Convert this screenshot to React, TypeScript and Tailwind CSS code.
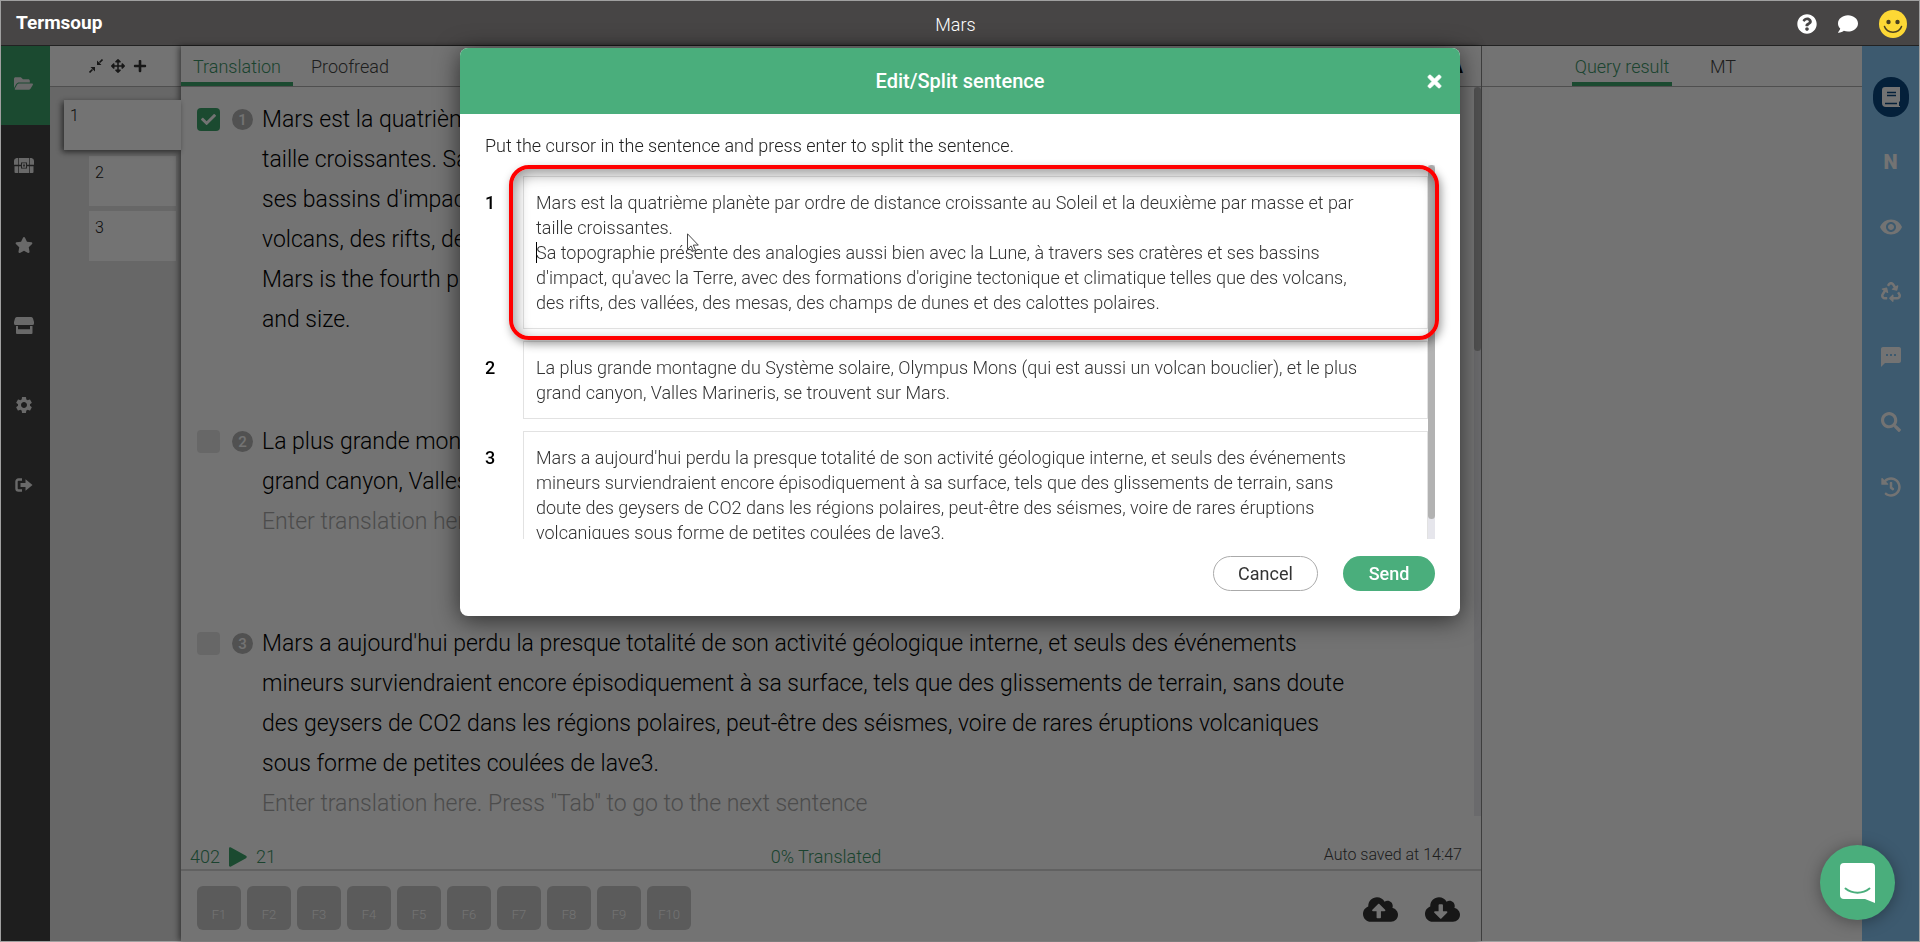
import { useState, type ReactNode } from "react";
import {
  FaFolderOpen,
  FaStar,
  FaArrowsAlt,
  FaPlus,
  FaQuestionCircle,
  FaComment,
  FaRecycle,
  FaSearch,
  FaHistory,
  FaCloudUploadAlt,
  FaCloudDownloadAlt,
  FaTimes,
  FaCheck,
} from "react-icons/fa";
import { MdSettings, MdVisibility, MdSms } from "react-icons/md";

const sentences = [
  "Mars est la quatrième planète par ordre de distance croissante au Soleil et la deuxième par masse et par\ntaille croissantes.\nSa topographie présente des analogies aussi bien avec la Lune, à travers ses cratères et ses bassins\nd'impact, qu'avec la Terre, avec des formations d'origine tectonique et climatique telles que des volcans,\ndes rifts, des vallées, des mesas, des champs de dunes et des calottes polaires.",
  "La plus grande montagne du Système solaire, Olympus Mons (qui est aussi un volcan bouclier), et le plus\ngrand canyon, Valles Marineris, se trouvent sur Mars.",
  "Mars a aujourd'hui perdu la presque totalité de son activité géologique interne, et seuls des événements\nmineurs surviendraient encore épisodiquement à sa surface, tels que des glissements de terrain, sans\ndoute des geysers de CO2 dans les régions polaires, peut-être des séismes, voire de rares éruptions\nvolcaniques sous forme de petites coulées de lave3.",
];

const segments = [
  {
    done: true,
    source:
      "Mars est la quatrième planète par ordre de distance croissante au Soleil et la deuxième par masse et par\ntaille croissantes. Sa topographie présente des analogies aussi bien avec la Lune, à travers ses cratères et\nses bassins d'impact, qu'avec la Terre, avec des formations d'origine tectonique et climatique telles que des\nvolcans, des rifts, des vallées, des mesas, des champs de dunes et des calottes polaires.",
    target: "Mars is the fourth planet from the Sun by distance and the second by increasing mass\nand size.",
  },
  {
    done: false,
    source:
      "La plus grande montagne du Système solaire, Olympus Mons (qui est aussi un volcan bouclier), et le plus\ngrand canyon, Valles Marineris, se trouvent sur Mars.",
    target: "",
  },
  {
    done: false,
    source:
      "Mars a aujourd'hui perdu la presque totalité de son activité géologique interne, et seuls des événements\nmineurs surviendraient encore épisodiquement à sa surface, tels que des glissements de terrain, sans doute\ndes geysers de CO2 dans les régions polaires, peut-être des séismes, voire de rares éruptions volcaniques\nsous forme de petites coulées de lave3.",
    target: "",
  },
];

const fKeys = ["F1", "F2", "F3", "F4", "F5", "F6", "F7", "F8", "F9", "F10"];

function ChestIcon() {
  return (
    <svg viewBox="0 0 20 15" className="w-5 h-[15px]" fill="currentColor">
      <path d="M2.500 0H4v6.800H0V3A3 3 0 0 1 2.500 0zM4.700 0h10.600v6.800H13V4.600H7v2.200H4.700zM16 0h1.500A3 3 0 0 1 20 3v3.800h-4zM.5 8.200H4V15H1.500a1 1 0 0 1-1-1zM4.700 8.200H7v2.300h6V8.200h2.300V15H4.700zM16 8.200h3.500V14a1 1 0 0 1-1 1H16z" />
      <path fillRule="evenodd" d="M7.900 5.300h4.200v4.500H7.900zM9.200 6.500v2.100h1.600V6.500z" />
    </svg>
  );
}

function StoreIcon() {
  return (
    <svg viewBox="0 0 20 17" className="w-5 h-[17px]" fill="currentColor">
      <path d="M3 0h14a2 2 0 0 1 2 1.500L20 5v1.500A1.500 1.500 0 0 1 18.500 8h-17A1.500 1.500 0 0 1 0 6.500V5l1-3.500A2 2 0 0 1 3 0z" />
      <path d="M2 9h2v3.300h12V9h2.500v7a1 1 0 0 1-1 1H3a1 1 0 0 1-1-1z" />
    </svg>
  );
}

function LeaveIcon() {
  return (
    <svg viewBox="0 0 18 14" className="w-[18px] h-3.5" fill="currentColor">
      <path d="M7 1.500H3.500a2 2 0 0 0-2 2v7a2 2 0 0 0 2 2H7" fill="none" stroke="currentColor" strokeWidth="2.400" />
      <path d="M5.500 5h5V1.200L17.500 7l-7 5.800V9h-5z" />
    </svg>
  );
}

function ShrinkIcon() {
  return (
    <svg viewBox="0 0 14 14" className="h-3.5 w-3.5" fill="currentColor">
      <path d="M13.500.5 10.500 3.500M.5 13.500l3-3" stroke="currentColor" strokeWidth="1.600" />
      <path d="M8 1.500V6h4.500zM1.500 8H6v4.500z" />
    </svg>
  );
}

function BookIcon() {
  return (
    <svg viewBox="0 0 18 20" className="w-[18px] h-5">
      <path d="M3 0h15v14.500h-1V19h1v1H4a4 4 0 0 1-4-4V3a3 3 0 0 1 3-3z" fill="currentColor" />
      <path d="M5 5.500h9M5 8.500h9M3 16.500h12" stroke="#0a4780" strokeWidth="1.600" />
    </svg>
  );
}

function SmileyIcon() {
  return (
    <svg viewBox="0 0 28 28" className="w-7 h-7">
      <circle cx="14" cy="14" r="14" fill="#fdd835" />
      <circle cx="9.500" cy="12" r="2.200" fill="#4a4020" />
      <circle cx="18.500" cy="12" r="2.200" fill="#4a4020" />
      <path d="M5.500 16.500C8 24 20 24 22.500 16.500" fill="none" stroke="#4a4020" strokeWidth="1.500" strokeLinecap="round" />
    </svg>
  );
}

function NavButton({ label, active, children }: { label: string; active?: boolean; children: ReactNode }) {
  return (
    <button
      aria-label={label}
      className={`flex w-full items-center justify-center pr-1 text-[#e8e8e8] ${active ? "h-[79px] bg-[#3ca56c] pb-1" : "h-20"}`}
    >
      {children}
    </button>
  );
}

function ToolButton({ label, active, children }: { label: string; active?: boolean; children: ReactNode }) {
  return (
    <button
      aria-label={label}
      className={`flex h-10 w-9 items-center justify-center rounded-full text-[20px] text-white ${active ? "bg-[#0a4780]" : ""}`}
    >
      {children}
    </button>
  );
}

function Header() {
  return (
    <header className="flex h-[45px] shrink-0 items-center border-b border-[#222] bg-[#474545] pr-3 pl-[15px] text-white">
      <div className="flex-1 text-[19px] font-bold">Termsoup</div>
      <h1 className="mr-3 pt-0.5 text-[18px]">Mars</h1>
      <div className="flex flex-1 items-center justify-end gap-[21px] pt-0.5">
        <button aria-label="Help"><FaQuestionCircle className="h-5 w-5" /></button>
        <button aria-label="Messages"><FaComment className="h-5 w-5" /></button>
        <button aria-label="Account"><SmileyIcon /></button>
      </div>
    </header>
  );
}

function PagesPanel() {
  return (
    <section className="flex w-[131px] shrink-0 flex-col bg-[#e5e5e5]">
      <div className="flex h-[41px] items-center justify-end gap-2 border-b border-[#b0b0b0] bg-white pr-[34px] text-[14px] text-[#333]">
        <button aria-label="Collapse"><ShrinkIcon /></button>
        <button aria-label="Move"><FaArrowsAlt /></button>
        <button aria-label="Add page"><FaPlus /></button>
      </div>
      <div className="flex flex-col items-end pt-[13px] text-[16px] leading-5 text-[#222]">
        <div className="relative z-10 mb-1.5 h-[50px] w-[117px] bg-white px-1.5 py-1.5 shadow-[-2px_2px_6px_rgba(0,0,0,0.6)]">1</div>
        <div className="mr-[5px] mb-[5px] h-[50px] w-[87px] bg-white px-1.5 py-[7px]">2</div>
        <div className="mr-[5px] h-[50px] w-[87px] bg-white px-1.5 py-[7px]">3</div>
      </div>
    </section>
  );
}

function Segment({ index, done, source, target }: { index: number; done: boolean; source: string; target: string }) {
  return (
    <li className="flex text-[23px] leading-10">
      <label className="mt-2 mr-3 h-[23px] w-[23px] shrink-0">
        <input type="checkbox" defaultChecked={done} className="peer sr-only" aria-label={`Sentence ${index} done`} />
        <span className="flex h-full w-full items-center justify-center rounded-sm bg-[#e4e4e4] text-[15px] text-white peer-checked:bg-[#3ca56c]">
          {done && <FaCheck />}
        </span>
      </label>
      <span className="mt-[9px] mr-[9px] flex h-[21px] w-[21px] shrink-0 items-center justify-center rounded-full bg-[#b4b4b4] text-[15px] font-medium text-white">
        {index}
      </span>
      <div className="whitespace-pre">
        <p>{source}</p>
        {target ? <p>{target}</p> : <p className="text-[#a8a8a8]">Enter translation here. Press "Tab" to go to the next sentence</p>}
      </div>
    </li>
  );
}

function Editor() {
  return (
    <main className="flex min-w-0 flex-1 flex-col bg-white shadow-[-2px_0_6px_rgba(0,0,0,0.5)]">
      <nav className="flex h-[41px] shrink-0 items-stretch border-b border-[#b0b0b0] text-[18px]">
        <button className="w-28 border-b-4 border-[#3ca56c] pt-1 text-[#3c9568]">Translation</button>
        <button className="border-b-4 border-transparent px-[18px] pt-1 text-[#444]">Proofread</button>
        <button aria-label="Font size" className="ml-auto pr-[18px] text-[20px] font-bold">A</button>
      </nav>
      <div className="flex min-h-0 flex-1">
        <ol className="flex min-w-0 flex-1 flex-col gap-[82px] pt-[13px] pl-4">
          {segments.map((s, i) => (
            <Segment key={i} index={i + 1} {...s} />
          ))}
        </ol>
        <div className="w-[7px] bg-[#ececf0]">
          <div className="h-[264px] rounded bg-[#b2b2b2]" />
        </div>
      </div>
      <div className="flex h-[55px] shrink-0 items-center border-b-2 border-[#d8d8d8] px-[9px] pt-7 text-[18px] text-[#3c9568]">
        <div className="flex flex-1 items-center gap-[9px]">
          402
          <svg viewBox="0 0 18 20" className="h-5 w-[18px]" fill="#3ca56c">
            <path d="M0 1.500C0 .3 1 0 2 .6l15 8.200c1 .6 1 1.800 0 2.400L2 19.400c-1 .6-2 .3-2-.9z" />
          </svg>
          21
        </div>
        <div>0% Translated</div>
        <div className="flex-1 pr-2.5 pb-1 text-right text-[16px] text-[#444]">Auto saved at 14:47</div>
      </div>
      <footer className="flex h-[70px] shrink-0 items-center justify-between pt-1 pr-[21px] pl-4">
        <div className="flex gap-1.5">
          {fKeys.map((k) => (
            <button key={k} className="flex h-11 w-11 items-end justify-center rounded-md bg-[#cacaca] pb-1.5 text-[13px] text-white">
              {k}
            </button>
          ))}
        </div>
        <div className="flex gap-[27px] pt-0.5 text-[35px] text-[#333]">
          <button aria-label="Upload"><FaCloudUploadAlt /></button>
          <button aria-label="Download"><FaCloudDownloadAlt /></button>
        </div>
      </footer>
    </main>
  );
}

function ResultPanel() {
  return (
    <aside className="w-[381px] shrink-0 border-l border-[#8a8a8a] bg-white">
      <nav className="flex h-[41px] items-stretch border-b border-[#b0b0b0] pl-[90px] text-[18px]">
        <button className="w-[100px] border-b-4 border-[#3ca56c] pt-1 text-[#3c9568]">Query result</button>
        <button className="border-b-4 border-transparent px-[38px] pt-1 text-[#444]">MT</button>
      </nav>
    </aside>
  );
}

function SplitDialog({ onClose }: { onClose: () => void }) {
  return (
    <div
      role="dialog"
      aria-label="Edit/Split sentence"
      className="fixed top-12 left-1/2 z-30 w-[1000px] max-w-full -translate-x-1/2 overflow-hidden rounded-lg bg-white shadow-[0_4px_24px_rgba(0,0,0,0.6)]"
    >
      <div className="flex h-[66px] items-center bg-[#4aae7c] px-[18px] text-white">
        <span className="w-4" />
        <h2 className="flex-1 text-center text-[20px] font-medium">Edit/Split sentence</h2>
        <button aria-label="Close" onClick={onClose} className="flex w-4 justify-center text-[19px]">
          <FaTimes className="shrink-0" stroke="currentColor" strokeWidth="24" />
        </button>
      </div>
      <div className="px-[25px] pt-5 pb-[25px]">
        <p className="text-[18px] leading-6 text-[#222]">Put the cursor in the sentence and press enter to split the sentence.</p>
        <div className="relative mt-[7px]">
          <div className="flex h-[374px] overflow-hidden">
            <ol className="flex flex-1 flex-col gap-3 pt-[11px]">
              {sentences.map((s, i) => (
                <li key={i} className="flex text-[18px] leading-[25px]">
                  <label htmlFor={`sentence-${i}`} className="w-[38px] shrink-0 pt-3.5 font-medium">{i + 1}</label>
                  <textarea
                    id={`sentence-${i}`}
                    defaultValue={s}
                    rows={s.split("\n").length}
                    className="flex-1 resize-none overflow-hidden border border-[#e2e2e2] px-3 py-[13px] text-[#333]"
                  />
                </li>
              ))}
            </ol>
            <div className="w-[7px] bg-[#e6e6ec]">
              <div className="h-[354px] rounded bg-[#b2b2b2]" />
            </div>
          </div>
          {/* highlight frame around the sentence being split */}
          <div className="pointer-events-none absolute top-0 -right-1 left-6 h-[175px] rounded-[20px] border-4 border-[#ff0000] shadow-[2px_4px_10px_rgba(0,0,0,0.4),inset_3px_5px_14px_rgba(0,0,0,0.4)]" />
          <div className="pointer-events-none absolute top-[77px] left-[51px] h-[21px] w-px bg-black" />
          <svg viewBox="0 0 12 19" className="pointer-events-none absolute top-[68px] left-[202px] h-[19px] w-3">
            <path d="M.5 .8v15.500l3.600-3.400 2.300 5.300 2.200-1-2.300-5.100h5z" fill="#fff" stroke="#333" strokeWidth=".9" />
          </svg>
        </div>
        <div className="mt-[17px] flex justify-end gap-[25px] text-[18px]">
          <button onClick={onClose} className="h-[35px] w-[105px] rounded-full border border-[#aaa] font-normal text-[#333]">Cancel</button>
          <button className="h-[35px] w-[92px] rounded-full bg-[#4aae7c] font-medium text-white">Send</button>
        </div>
      </div>
    </div>
  );
}

export default function App() {
  const [open, setOpen] = useState(true);

  return (
    <div className="flex h-screen flex-col border border-[#a0a0a0] font-[Roboto,sans-serif] font-light text-black">
      <Header />
      <div className="relative flex min-h-0 flex-1">
        <nav className="w-[49px] shrink-0 bg-[#444]">
          <NavButton label="Projects" active><FaFolderOpen className="h-[19px] w-[19px]" /></NavButton>
          <NavButton label="Resources"><ChestIcon /></NavButton>
          <NavButton label="Favorites"><FaStar className="h-[18px] w-[18px]" /></NavButton>
          <NavButton label="Store"><StoreIcon /></NavButton>
          <NavButton label="Settings"><MdSettings className="h-5 w-5" /></NavButton>
          <NavButton label="Log out"><LeaveIcon /></NavButton>
        </nav>
        <PagesPanel />
        <Editor />
        <ResultPanel />
        <nav className="flex w-[57px] shrink-0 flex-col items-center gap-[25px] bg-[#87c8f5] pt-[31px]">
          <ToolButton label="Dictionary" active><BookIcon /></ToolButton>
          <ToolButton label="Notes"><span className="font-black">N</span></ToolButton>
          <ToolButton label="Preview"><MdVisibility className="h-6 w-6" /></ToolButton>
          <ToolButton label="Reuse"><FaRecycle /></ToolButton>
          <ToolButton label="Comments"><MdSms className="h-6 w-6" /></ToolButton>
          <ToolButton label="Search"><FaSearch /></ToolButton>
          <ToolButton label="History"><FaHistory /></ToolButton>
        </nav>
        {open && <div className="absolute inset-0 z-20 bg-black/55" />}
      </div>
      {open && <SplitDialog onClose={() => setOpen(false)} />}
      <button
        aria-label="Open chat"
        className="fixed right-[25px] bottom-[22px] z-30 flex h-[75px] w-[75px] items-center justify-center rounded-full bg-[#4aae7c] shadow-[0_2px_16px_rgba(0,0,0,0.35)]"
      >
        <svg viewBox="0 0 35 40" className="h-10 w-[35px]">
          <path d="M4 0h27a4 4 0 0 1 4 4v36l-10-4H4a4 4 0 0 1-4-4V4a4 4 0 0 1 4-4z" fill="#fff" />
          <path d="M5.500 25.500c7 5.500 17 5.500 24 0" fill="none" stroke="#4aae7c" strokeWidth="2" strokeLinecap="round" />
        </svg>
      </button>
    </div>
  );
}
